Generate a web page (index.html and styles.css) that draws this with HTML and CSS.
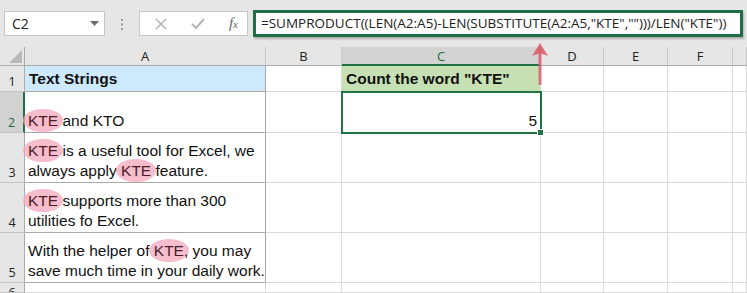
FILE: index.html
```html
<!DOCTYPE html>
<html lang="en">
<head>
    <meta charset="UTF-8">
    <title>Count word KTE</title>
    <link rel="stylesheet" href="styles.css">
</head>
<body>
    <div class="toolbar">
        <div class="namebox">
            <span>C2</span>
            <svg class="caret" width="9" height="5" viewBox="0 0 9 5"><path d="M0 0h9L4.5 5z" fill="#6f6f6f"/></svg>
        </div>
        <svg class="grip" width="3" height="11" viewBox="0 0 3 11">
            <rect x="0" y="0" width="2" height="2" fill="#9c9c9c"/>
            <rect x="0" y="4.5" width="2" height="2" fill="#9c9c9c"/>
            <rect x="0" y="9" width="2" height="2" fill="#9c9c9c"/>
        </svg>
        <div class="btns">
            <svg width="12" height="12" viewBox="0 0 12 12"><path d="M1 1l10 10M11 1L1 11" stroke="#b4b4b4" stroke-width="1.6"/></svg>
            <svg width="14" height="11" viewBox="0 0 14 11"><path d="M1 6l4 4L13 1" stroke="#b4b4b4" stroke-width="2" fill="none"/></svg>
            <span class="fx">f<small>x</small></span>
        </div>
        <div class="formula">=SUMPRODUCT((LEN(A2:A5)-LEN(SUBSTITUTE(A2:A5,"KTE","")))/LEN("KTE"))</div>
    </div>

    <div class="sheet">
        <!-- header row -->
        <div class="hd corner"><svg width="13" height="13" viewBox="0 0 13 13"><path d="M13 0v13H0z" fill="#b9b9b9"/></svg></div>
        <div class="hd col">A</div>
        <div class="hd col">B</div>
        <div class="hd col active-col">C</div>
        <div class="hd col">D</div>
        <div class="hd col">E</div>
        <div class="hd col">F</div>
        <div class="hd col"></div>

        <!-- row 1 -->
        <div class="hd row">1</div>
        <div class="cell tbl title">Text Strings</div>
        <div class="cell"></div>
        <div class="cell green title">Count the word "KTE"</div>
        <div class="cell"></div>
        <div class="cell"></div>
        <div class="cell"></div>
        <div class="cell"></div>

        <!-- row 2 -->
        <div class="hd row active-row">2</div>
        <div class="cell tbl"><span><span class="hl">KTE</span> and KTO</span></div>
        <div class="cell"></div>
        <div class="cell sel num">5</div>
        <div class="cell"></div>
        <div class="cell"></div>
        <div class="cell"></div>
        <div class="cell"></div>

        <!-- row 3 -->
        <div class="hd row">3</div>
        <div class="cell tbl"><span><span class="hl">KTE</span> is a useful tool for Excel, we<br>always apply <span class="hl">KTE</span> feature.</span></div>
        <div class="cell"></div>
        <div class="cell"></div>
        <div class="cell"></div>
        <div class="cell"></div>
        <div class="cell"></div>
        <div class="cell"></div>

        <!-- row 4 -->
        <div class="hd row">4</div>
        <div class="cell tbl"><span><span class="hl">KTE</span> supports more than 300<br>utilities fo Excel.</span></div>
        <div class="cell"></div>
        <div class="cell"></div>
        <div class="cell"></div>
        <div class="cell"></div>
        <div class="cell"></div>
        <div class="cell"></div>

        <!-- row 5 -->
        <div class="hd row">5</div>
        <div class="cell tbl"><span>With the helper of <span class="hl">KTE</span>, you may<br>save much time in your daily work.</span></div>
        <div class="cell"></div>
        <div class="cell"></div>
        <div class="cell"></div>
        <div class="cell"></div>
        <div class="cell"></div>
        <div class="cell"></div>

        <!-- row 6 -->
        <div class="hd row last">6</div>
        <div class="cell"></div>
        <div class="cell"></div>
        <div class="cell"></div>
        <div class="cell"></div>
        <div class="cell"></div>
        <div class="cell"></div>
        <div class="cell"></div>
    </div>

    <svg class="arrow" width="20" height="46" viewBox="0 0 20 46">
        <path d="M10 4V42" stroke="#d9606e" stroke-width="3" opacity="0.85"/>
        <path d="M10 0L18 13L10 10L2 13Z" fill="#d9606e" opacity="0.9"/>
    </svg>
</body>
</html>
```

FILE: styles.css
```css
body {
    margin: 0;
    background: #fff;
    font-family: "Liberation Sans", Arial, sans-serif;
    position: relative;
    width: 747px;
    height: 293px;
    overflow: hidden;
}
.toolbar {
    height: 47px;
    background: #e6e6e6;
    display: flex;
    align-items: flex-start;
    padding-top: 11px;
    box-sizing: border-box;
}
.namebox {
    margin-left: 4px;
    width: 101px;
    height: 25px;
    box-sizing: border-box;
    background: #fff;
    border: 1px solid #c6c6c6;
    display: flex;
    align-items: center;
    justify-content: space-between;
    padding: 0 5px 0 7px;
    font-family: "Open Sans", sans-serif;
    font-size: 14px;
    color: #222;
}
.grip {
    margin: 8px 0 0 16px;
}
.btns {
    margin-left: 15px;
    width: 109px;
    height: 25px;
    box-sizing: border-box;
    background: #fff;
    border: 1px solid #c6c6c6;
    display: flex;
    align-items: center;
    justify-content: space-between;
    padding: 0 9px 0 15px;
}
.fx {
    font-family: "Liberation Serif", serif;
    font-style: italic;
    font-size: 15px;
    color: #666;
}
.fx small {
    font-size: 11px;
}
.formula {
    margin: -1px 0 0 5px;
    width: 490px;
    height: 27px;
    box-sizing: border-box;
    background: #fff;
    border: 3px solid #1f6e44;
    box-shadow: 1px 2px 2px rgba(0, 0, 0, 0.25);
    font-family: "Open Sans", sans-serif;
    font-size: 13.5px;
    color: #222;
    padding-left: 5px;
    line-height: 21px;
    white-space: nowrap;
}
.sheet {
    display: grid;
    grid-template-columns: 25px 241px 76px 199px 63px 64px 65px 14px;
    grid-template-rows: 19px 26px 41px 50px 50px 50px 10px;
}
.hd {
    background: #e6e6e6;
    border-right: 1px solid #c6c6c6;
    border-bottom: 1px solid #ababab;
    box-sizing: border-box;
    font-family: "Open Sans", sans-serif;
    font-size: 13px;
    color: #222;
    overflow: hidden;
}
.corner {
    display: flex;
    align-items: flex-end;
    justify-content: flex-end;
    padding: 0 2px 2px 0;
    border-right: 1px solid #ababab;
}
.col {
    display: flex;
    align-items: center;
    justify-content: center;
}
.row {
    border-right: 1px solid #ababab;
    border-bottom: 1px solid #c6c6c6;
    display: flex;
    align-items: flex-end;
    justify-content: center;
    font-size: 12.5px;
    line-height: 19px;
}
.row.last {
    align-items: flex-start;
    line-height: 16px;
    padding-top: 2px;
}
.active-col {
    background: #d2d2d2;
    border-bottom: 2px solid #217346;
    color: #1d6a40;
}
.active-row {
    background: #d2d2d2;
    border-right: 2px solid #217346;
    color: #1d6a40;
}
.cell {
    border-right: 1px solid #dadada;
    border-bottom: 1px solid #dadada;
    box-sizing: border-box;
    display: flex;
    align-items: flex-end;
    padding: 0 3px 1px 3px;
    font-size: 15.5px;
    line-height: 20px;
    color: #111;
    white-space: nowrap;
}
.tbl {
    border-right: 1px solid #a9a9a9;
    border-bottom: 1px solid #a9a9a9;
}
.title {
    font-weight: bold;
    padding-left: 4px;
    background: #cde9fb;
    line-height: 22px;
}
.green {
    background: #c6e0b4;
}
.num {
    justify-content: flex-end;
}
.sel {
    position: relative;
    outline: 2px solid #217346;
    outline-offset: -1px;
    z-index: 1;
}
.sel::after {
    content: "";
    position: absolute;
    right: -4px;
    bottom: -4px;
    width: 5px;
    height: 5px;
    background: #217346;
    border: 1px solid #fff;
}
.hl {
    background: rgba(243, 167, 187, 0.75);
    border-radius: 50%;
    padding: 3px 5px;
    margin: 0 -5px;
    color: #4a1c2a;
}
.arrow {
    position: absolute;
    left: 530px;
    top: 43px;
}
```
